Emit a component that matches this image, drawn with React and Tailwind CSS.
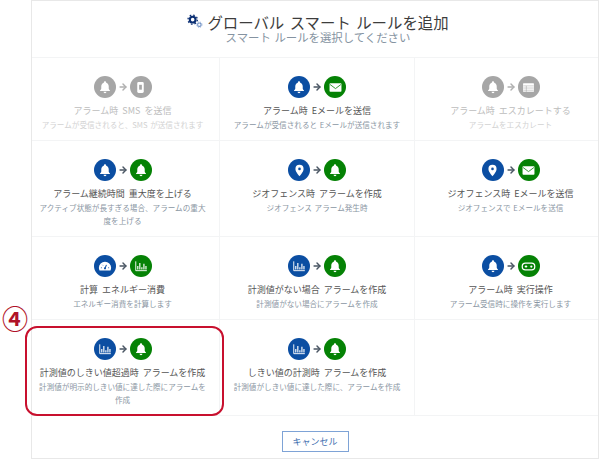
import { ArrowRight } from "lucide-react";

const BLUE = "bg-[#0b4ea2]";
const GREEN = "bg-[#058205]";
const GREY = "bg-[#a6a6a6]";

function BellIcon() {
  return (
    <svg viewBox="0 0 24 24" className="w-[14px] h-[14px]" fill="white">
      <path d="M12 2a2 2 0 0 0-2 2v.6C7 5.500 5.600 8 5.600 11v3.400c0 1.400-1 2.400-2.100 3.400V19h17v-1.200c-1.100-1-2.100-2-2.100-3.400V11c0-3-1.400-5.500-4.400-6.400V4a2 2 0 0 0-2-2z" />
      <path d="M9.500 20a2.500 2.500 0 0 0 5 0z" />
    </svg>
  );
}

function PinIcon({ hole }) {
  return (
    <svg viewBox="0 0 24 24" className="w-[13px] h-[13px]">
      <path fill="white" d="M12 1.500A7.500 7.500 0 0 0 4.500 9c0 5.400 7.500 13.500 7.500 13.500S19.500 14.400 19.500 9A7.500 7.500 0 0 0 12 1.500z" />
      <circle cx="12" cy="9" r="2.400" fill={hole} />
    </svg>
  );
}

function MailIcon() {
  return (
    <svg viewBox="0 0 24 24" className="w-[13px] h-[13px]">
      <rect x="1" y="4" width="22" height="16" rx="1.500" fill="white" />
      <path d="M2 6.500 12 14l10-7.500" fill="none" stroke="#058205" strokeWidth="1.500" />
    </svg>
  );
}

function PhoneIcon() {
  return (
    <svg viewBox="0 0 24 24" className="w-[13px] h-[13px]">
      <rect x="6" y="2" width="12" height="20" rx="2.500" fill="white" />
      <rect x="9.500" y="7" width="5" height="9" fill="#a6a6a6" />
    </svg>
  );
}

function TableIcon() {
  return (
    <svg viewBox="0 0 24 24" className="w-[13px] h-[13px]">
      <rect x="2" y="4" width="20" height="16" rx="1" fill="white" />
      <path d="M2.500 9h19M2.500 13h19M2.500 17h19M8 9v11" stroke="#a6a6a6" strokeWidth="1" fill="none" />
    </svg>
  );
}

function GaugeIcon() {
  return (
    <svg viewBox="0 0 24 24" className="w-[14px] h-[14px]">
      <path fill="white" d="M12 4.500A10.500 10.500 0 0 0 1.500 15c0 1.700.4 3 1.100 4.500h18.800c.7-1.500 1.100-2.800 1.100-4.500A10.500 10.500 0 0 0 12 4.500z" />
      <path d="M12 16l2.500-6" stroke="#0b4ea2" strokeWidth="1.800" />
      <circle cx="12" cy="16" r="1.800" fill="#0b4ea2" />
      <path d="M5 15h1.500M7.500 10l1 1M17.500 15H19" stroke="#0b4ea2" strokeWidth="1.500" />
    </svg>
  );
}

function ChartIcon() {
  return (
    <svg viewBox="0 0 24 24" className="w-[14px] h-[14px]">
      <path d="M3 4v16h19" fill="none" stroke="white" strokeWidth="1.600" />
      <path d="M6.500 18v-6M10 18V7M13.500 18v-4M17 18V8M20.500 18v-6" fill="none" stroke="white" strokeWidth="2" />
    </svg>
  );
}

function GameIcon() {
  return (
    <svg viewBox="0 0 24 24" className="w-[15px] h-[15px]">
      <rect x="2" y="6.500" width="20" height="11" rx="5" fill="none" stroke="white" strokeWidth="2" />
      <path d="M6 12h4M8 10v4" stroke="white" strokeWidth="1.600" />
      <circle cx="16.500" cy="12" r="1.800" fill="white" />
    </svg>
  );
}

const icons = {
  bell: () => <BellIcon />,
  mail: () => <MailIcon />,
  pin: () => <PinIcon hole="#0b4ea2" />,
  phone: () => <PhoneIcon />,
  table: () => <TableIcon />,
  gauge: () => <GaugeIcon />,
  chart: () => <ChartIcon />,
  game: () => <GameIcon />,
};

const rules = [
  { from: "bell", to: "phone", title: "アラーム時 SMS を送信", desc: "アラームが受信されると、SMS が送信されます", off: true },
  { from: "bell", to: "mail", title: "アラーム時 Eメールを送信", desc: "アラームが受信されると Eメールが送信されます" },
  { from: "bell", to: "table", title: "アラーム時 エスカレートする", desc: "アラームをエスカレート", off: true },
  { from: "bell", to: "bell", title: "アラーム継続時間 重大度を上げる", desc: "アクティブ状態が長すぎる場合、アラームの重大度を上げる" },
  { from: "pin", to: "bell", title: "ジオフェンス時 アラームを作成", desc: "ジオフェンス アラーム発生時" },
  { from: "pin", to: "mail", title: "ジオフェンス時 Eメールを送信", desc: "ジオフェンスで Eメールを送信" },
  { from: "gauge", to: "chart", title: "計算 エネルギー消費", desc: "エネルギー消費を計算します" },
  { from: "chart", to: "bell", title: "計測値がない場合 アラームを作成", desc: "計測値がない場合にアラームを作成" },
  { from: "bell", to: "game", title: "アラーム時 実行操作", desc: "アラーム受信時に操作を実行します" },
  { from: "chart", to: "bell", title: "計測値のしきい値超過時 アラームを作成", desc: "計測値が明示的しきい値に達した際にアラームを作成" },
  { from: "chart", to: "bell", title: "しきい値の計測時 アラームを作成", desc: "計測値がしきい値に達した際に、アラームを作成" },
  { title: "" },
];

const rowHeights = ["h-[83px]", "h-[96px]", "h-[83px]", "h-[96px]"];
const colClasses = ["border-r pl-[6px] pr-[12px]", "border-r px-[6px]", "pl-[14px] pr-[6px]"];

function Circle({ color, name }) {
  return (
    <span className={`w-[22px] h-[22px] rounded-full flex items-center justify-center ${color}`}>
      {icons[name]()}
    </span>
  );
}

function RuleCell({ rule, index }) {
  const col = index % 3;
  const row = Math.floor(index / 3);
  return (
    <div className={`${rowHeights[row]} ${colClasses[col]} flex flex-col items-center pt-[18px] text-center border-b border-[#f3f4f5]`}>
      {rule.title && (
        <>
          <div className="flex items-center gap-[2px]">
            <Circle color={rule.off ? GREY : BLUE} name={rule.from} />
            <ArrowRight className={`w-[10px] h-[10px] ${rule.off ? "text-[#b0b0b0]" : "text-[#4a5663]"}`} strokeWidth={3.500} />
            <Circle color={rule.off ? GREY : GREEN} name={rule.to} />
          </div>
          <div className={`mt-[6px] text-[9px] leading-[14px] whitespace-nowrap [word-spacing:2px] ${rule.off ? "text-[#bdbdbd]" : "text-[#555555]"}`}>{rule.title}</div>
          <div className={`text-[7.600px] leading-[13px] [word-spacing:1px] ${rule.off ? "text-[#d2d2d2]" : "text-[#8a96a3]"}`}>{rule.desc}</div>
        </>
      )}
    </div>
  );
}

export default function App() {
  return (
    <div className="relative w-[600px] h-[460px] bg-white overflow-hidden font-['Noto_Sans_CJK_JP','Noto_Sans',sans-serif]">
      <div className="ml-[31px] mr-px h-[459px] border border-[#e8e8e8] flex flex-col">
        <div className="h-[57px] shrink-0 flex flex-col items-center pt-[12px] pl-[6px] border-b border-[#f3f4f5]">
          <div className="flex items-center gap-[4px] h-[18px]">
            <svg viewBox="0 0 24 24" className="w-[16px] h-[16px]">
              <circle cx="8.500" cy="8.500" r="4.300" fill="none" stroke="#0b2f73" strokeWidth="3.200" />
              <circle cx="8.500" cy="8.500" r="7" fill="none" stroke="#0b2f73" strokeWidth="1.900" strokeDasharray="2.400 3.100" />
              <circle cx="18.500" cy="16" r="2.600" fill="none" stroke="#6d8fc4" strokeWidth="1.600" />
              <circle cx="18.500" cy="16" r="4" fill="none" stroke="#6d8fc4" strokeWidth="1.200" strokeDasharray="1.500 1.700" />
            </svg>
            <span className="text-[15.400px] leading-[18px] whitespace-nowrap text-[#3d3d3d] [word-spacing:2px]">グローバル スマート ルールを追加</span>
          </div>
          <div className="text-[11.400px] leading-[12px] whitespace-nowrap text-[#8593a1] [word-spacing:1px]">スマート ルールを選択してください</div>
        </div>
        <div className="grid grid-cols-[188px_195px_1fr]">
          {rules.map((rule, i) => (
            <RuleCell key={i} rule={rule} index={i} />
          ))}
        </div>
        <div className="flex-1 flex items-start justify-center pt-[15px]">
          <button className="w-[67px] h-[21px] border border-[#7ea3d6] text-[#3f6fb0] text-[9px] leading-none">キャンセル</button>
        </div>
      </div>
      {/* callout over the fourth row */}
      <div className="absolute left-[25px] top-[326px] w-[199px] h-[90px] rounded-[12px] border-2 border-[#c8102e]" />
      <div className="absolute left-[2px] top-[303px] text-[26px] leading-[30px] font-bold text-[#b01228]">④</div>
    </div>
  );
}
